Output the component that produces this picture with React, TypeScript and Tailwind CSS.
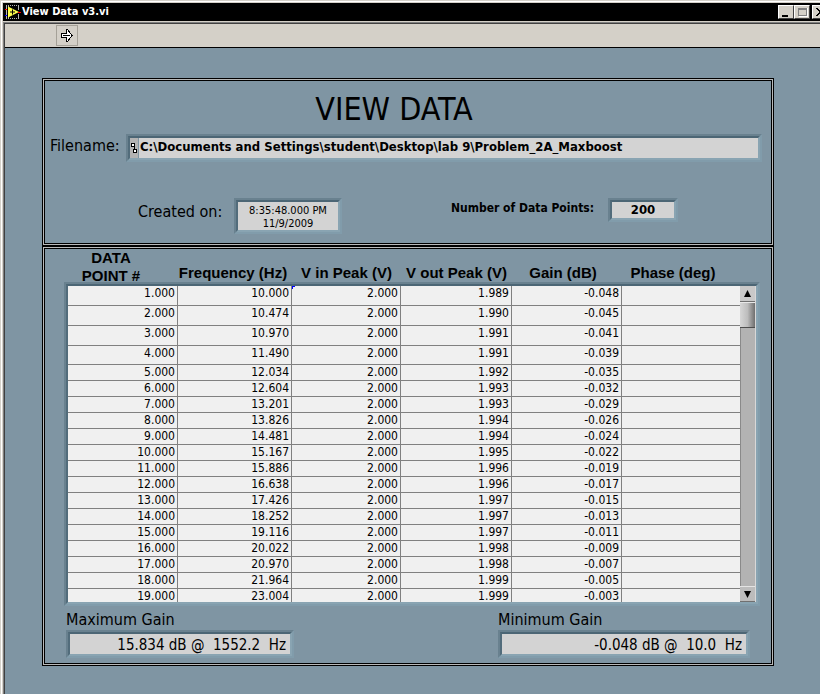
import type { ReactNode } from "react";

const SANS = "font-['DejaVu_Sans_Condensed','DejaVu_Sans','Noto_Sans',sans-serif]";
const HEAD = "font-['Liberation_Sans',Arial,sans-serif]";

type Row = [string, string, string, string];

const rows: Row[] = [
  ["1.000", "10.000", "1.989", "-0.048"],
  ["2.000", "10.474", "1.990", "-0.045"],
  ["3.000", "10.970", "1.991", "-0.041"],
  ["4.000", "11.490", "1.991", "-0.039"],
  ["5.000", "12.034", "1.992", "-0.035"],
  ["6.000", "12.604", "1.993", "-0.032"],
  ["7.000", "13.201", "1.993", "-0.029"],
  ["8.000", "13.826", "1.994", "-0.026"],
  ["9.000", "14.481", "1.994", "-0.024"],
  ["10.000", "15.167", "1.995", "-0.022"],
  ["11.000", "15.886", "1.996", "-0.019"],
  ["12.000", "16.638", "1.996", "-0.017"],
  ["13.000", "17.426", "1.997", "-0.015"],
  ["14.000", "18.252", "1.997", "-0.013"],
  ["15.000", "19.116", "1.997", "-0.011"],
  ["16.000", "20.022", "1.998", "-0.009"],
  ["17.000", "20.970", "1.998", "-0.007"],
  ["18.000", "21.964", "1.999", "-0.005"],
  ["19.000", "23.004", "1.999", "-0.003"],
];

function Columns() {
  return (
    <colgroup>
      <col className="w-[110px]" />
      <col className="w-[114px]" />
      <col className="w-[109px]" />
      <col className="w-[111px]" />
      <col className="w-[110px]" />
      <col />
    </colgroup>
  );
}

/* Two nested bevels: a faint outer edge and a darker inner one. */
function Sunken({ className = "", children }: { className?: string; children: ReactNode }) {
  return (
    <div className={`border-2 border-t-[#69818f] border-l-[#69818f] border-r-[#819cab] border-b-[#819cab] ${className}`}>
      <div className="flex border-2 border-t-[#4c6675] border-l-[#526c7b] border-r-[#89a4b2] border-b-[#89a4b2] bg-[#d3d3d3]">
        {children}
      </div>
    </div>
  );
}

function Panel({ className = "", children }: { className?: string; children: ReactNode }) {
  return (
    <section className="border border-black">
      <div className="border border-[#b9b9b9]">
        <div className={`border border-black ${className}`}>{children}</div>
      </div>
    </section>
  );
}

function CaptionButton({ label, className = "", children }: { label: string; className?: string; children: ReactNode }) {
  return (
    <button
      type="button"
      aria-label={label}
      className={`h-[14px] w-4 shrink-0 border border-t-white border-l-white border-r-[#404040] border-b-[#404040] bg-[#d4d0c8] ${className}`}
    >
      {children}
    </button>
  );
}

function TitleBar() {
  return (
    <header className="flex h-[18px] items-center overflow-hidden bg-black pl-[2px]">
      <svg width="16" height="16" viewBox="0 0 16 16" aria-hidden="true">
        <path d="M1.500 1v14M3.500 1v14M13.500 1v5M13.500 10v5" stroke="#b5b5b5" fill="none" />
        <path d="M3 1.500h11M3 14.500h11" stroke="#b5b5b5" strokeDasharray="1 1" fill="none" />
        <path d="M3 2.500L14 8 3 13.500z" fill="#ffff4d" />
        <path d="M5 8h5M7.500 5.500v5" stroke="#000" />
        <path d="M13 8.500h3M0 5.500h2" stroke="#f00" />
        <path d="M0 11.500h2" stroke="#00f" />
      </svg>
      <h1 className={`ml-px flex-1 text-[11px] leading-4 font-bold text-white ${SANS}`}>View Data v3.vi</h1>
      <CaptionButton label="Minimize">
        <svg width="14" height="12" shapeRendering="crispEdges"><path d="M3 9h6v2H3z" /></svg>
      </CaptionButton>
      <CaptionButton label="Maximize">
        <svg width="14" height="12" shapeRendering="crispEdges">
          <path d="M3.500 2.500h8v7h-8zM3 3.500h9" fill="none" stroke="#808080" />
          <path d="M12.500 2v8.500H4" fill="none" stroke="#fff" />
        </svg>
      </CaptionButton>
      <CaptionButton label="Close" className="-mr-2 ml-[2px]">
        <svg width="14" height="12" shapeRendering="crispEdges">
          <path d="M3 2h2v1h1v1h2V3h1V2h2v1h-1v1H9v1H8v2h1v1h1v1h1v1H9V9H8V8H6v1H5v1H3V9h1V8h1V7h1V5H5V4H4V3H3z" />
        </svg>
      </CaptionButton>
    </header>
  );
}

function ScrollBar() {
  return (
    <div className="flex w-4 shrink-0 flex-col border-r border-[#d8d8d8] bg-[#b3b3b3]">
      <button type="button" aria-label="Scroll up" className="flex h-4 items-center justify-center border-b border-[#707070] bg-[#c9c9c9]">
        <svg width="9" height="9"><path d="M4.500 1L8 8H1z" /></svg>
      </button>
      <div className="h-[26px] border-y border-t-[#e8e8e8] border-b-[#4d4d4d] bg-linear-to-r from-[#d6d6d6] via-[#bdbdbd] to-[#6f6f6f]" />
      <div className="flex-1 border-l border-[#8a8a8a]" />
      <button type="button" aria-label="Scroll down" className="flex h-4 items-center justify-center border-t border-b border-t-[#e4e4e4] border-b-[#707070] bg-[#bcbcbc]">
        <svg width="9" height="9"><path d="M4.500 8L8 1H1z" /></svg>
      </button>
    </div>
  );
}

function GainField({ id, label, value, width }: { id: string; label: string; value: string; width: string }) {
  return (
    <div className={width}>
      <label htmlFor={id} className={`block text-[16px] leading-5 ${SANS}`}>{label}</label>
      <Sunken>
        <input id={id} readOnly value={value} className={`h-5 w-full min-w-0 pt-[2px] pr-1 text-right text-[15px] leading-4 ${SANS}`} />
      </Sunken>
    </div>
  );
}

export default function App() {
  return (
    <div className="flex min-h-screen flex-col overflow-hidden border-t border-l border-[#d4d0c8] bg-[#7f95a3] text-black">
      <div className="flex flex-1 flex-col border-t border-l border-white">
        <div className="flex flex-1 flex-col border-t border-l border-[#d4d0c8]">
          <TitleBar />
          <div className="h-px bg-[#d4d0c8]" />
          <div className="flex flex-1 flex-col border-t border-l border-[#808080]">
            <div className="flex-1 border-t border-l border-[#404040]">
              <div className="flex h-6 items-start border-b border-black bg-[#d4d0c8] pt-px pl-[51px]">
                <button type="button" aria-label="Run" className="flex h-[21px] w-[22px] items-center justify-center border border-[#a5a198]">
                  <svg width="12" height="13" viewBox="0 0 12 13" shapeRendering="crispEdges">
                    <path d="M0.500 4.500h5v-4l1 0 4.500 6-4.500 6-1 0v-4h-5z" fill="#fff" stroke="#000" />
                    <path d="M2 6.500h7" stroke="#000" />
                  </svg>
                </button>
              </div>

              <main className="pt-[30px] pr-[46px] pl-[37px]">
                <Panel className="h-[164px]">
                  <h2 className={`pt-2 pr-7 text-center text-[32px] leading-10 ${SANS}`}>VIEW DATA</h2>
                  <div className="mt-[5px] flex items-start pr-[9px] pl-[5px]">
                    <label htmlFor="filename" className={`w-[76px] text-[16px] leading-6 ${SANS}`}>Filename:</label>
                    <Sunken className="flex-1">
                      <span className="flex w-[9px] items-center border-r border-[#7f95a3] bg-[#b3b3b3]">
                        <svg width="8" height="12" viewBox="0 0 8 12" shapeRendering="crispEdges" aria-hidden="true">
                          <path d="M1.500 1.500h3v3h-3zM3.500 7.500h3v3h-3zM4.500 5v2" fill="#fff" stroke="#000" />
                        </svg>
                      </span>
                      <input
                        id="filename"
                        readOnly
                        value={"C:\\Documents and Settings\\student\\Desktop\\lab 9\\Problem_2A_Maxboost"}
                        className={`h-5 min-w-0 flex-1 pb-1 pl-px text-[13px] leading-4 font-bold ${SANS}`}
                      />
                    </Sunken>
                  </div>
                  <div className="mt-9 flex items-start justify-between pr-[93px] pl-[93px]">
                    <div className="flex">
                      <label htmlFor="created" className={`w-24 pt-1 text-[16px] leading-5 ${SANS}`}>Created on:</label>
                      <Sunken>
                        <textarea
                          id="created"
                          readOnly
                          rows={2}
                          value={"8:35:48.000 PM\n11/9/2009"}
                          className={`h-7 w-[100px] resize-none overflow-hidden pt-[2px] text-center text-[11px] leading-[13px] ${SANS}`}
                        />
                      </Sunken>
                    </div>
                    <div className="flex">
                      <label htmlFor="points" className={`w-[157px] text-[12px] leading-5 font-bold ${SANS}`}>Number of Data Points:</label>
                      <Sunken>
                        <input id="points" readOnly value="200" className={`h-4 w-[62px] text-center text-[13px] leading-4 font-bold ${SANS}`} />
                      </Sunken>
                    </div>
                  </div>
                </Panel>

                <Panel className="h-[416px] pr-[11px] pl-[19px]">
                  <div className="h-[33px] px-1">
                    <table className={`h-9 w-full table-fixed text-[15px] leading-[18px] font-bold ${HEAD}`}>
                      <Columns />
                      <thead>
                        <tr className="align-bottom">
                          <th className="pr-6">DATA<br />POINT #</th>
                          <th className="pr-1 pb-[3px]">Frequency (Hz)</th>
                          <th className="pb-[3px]">V in Peak (V)</th>
                          <th className="pb-[3px]">V out Peak (V)</th>
                          <th className="pr-2 pb-[3px]">Gain (dB)</th>
                          <th className="pr-8 pb-[3px]">Phase (deg)</th>
                        </tr>
                      </thead>
                    </table>
                  </div>
                  <Sunken>
                    <div className="h-[316px] flex-1 overflow-hidden bg-[#f0f0f0]">
                      <table className={`w-full table-fixed border-separate border-spacing-0 text-right text-[12px] leading-[15px] ${SANS}`}>
                        <Columns />
                        <tbody>
                          {rows.map(([n, f, vout, gain], i) => (
                            <tr key={n} className={`align-top ${i < 3 ? "h-5" : i === 3 ? "h-[19px]" : "h-4"}`}>
                              {[n, f, "2.000", vout, gain].map((v, c) => (
                                <td key={c} className="relative border-r border-b border-[#808080] pr-[2px]">
                                  {i === 0 && c === 2 && (
                                    <span className="absolute top-0 left-0 h-[3px] w-[3px] border-t border-l border-[#0000ff]" />
                                  )}
                                  {v}
                                </td>
                              ))}
                              <td className="border-b border-[#808080]" />
                            </tr>
                          ))}
                        </tbody>
                      </table>
                    </div>
                    <ScrollBar />
                  </Sunken>
                  <div className="mt-1 flex justify-between pr-[10px] pl-[2px]">
                    <GainField id="max-gain" label="Maximum Gain" value="15.834 dB @  1552.2  Hz" width="w-[228px]" />
                    <GainField id="min-gain" label="Minimum Gain" value="-0.048 dB @  10.0  Hz" width="w-[252px]" />
                  </div>
                </Panel>
              </main>
            </div>
          </div>
        </div>
      </div>
    </div>
  );
}
